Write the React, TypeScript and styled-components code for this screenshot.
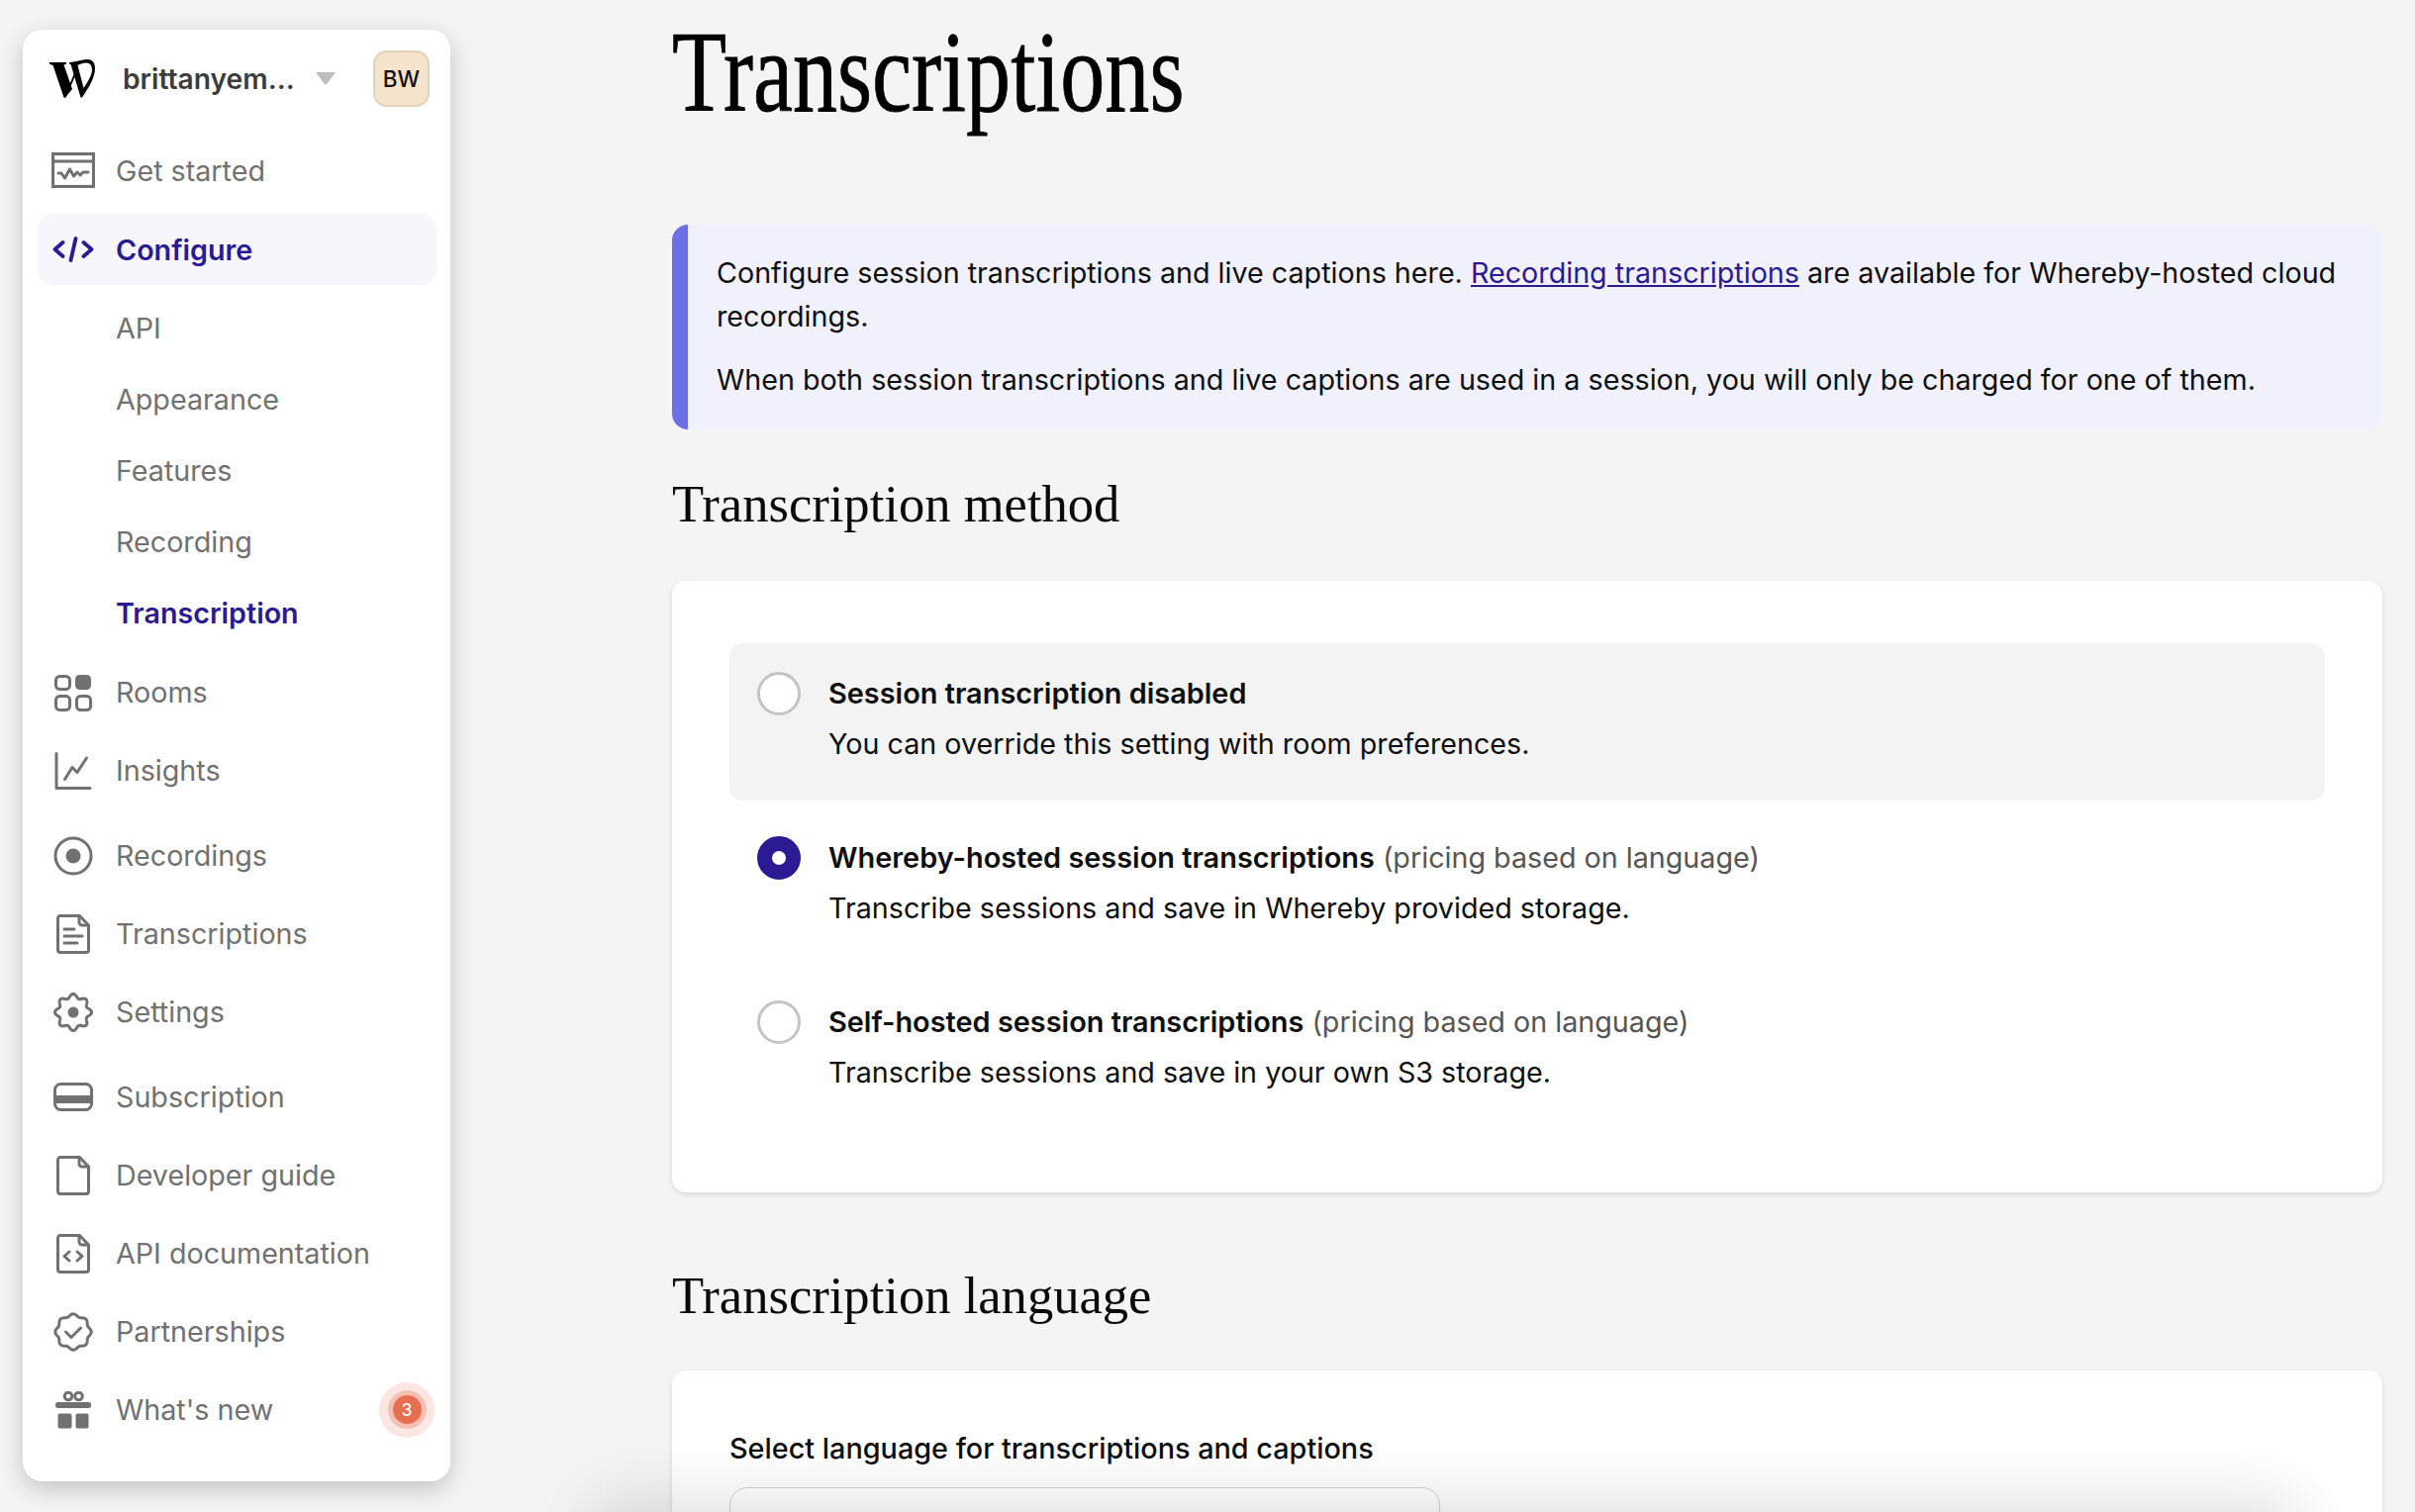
import React from 'react';
import styled, { createGlobalStyle } from 'styled-components';

const GlobalStyle = createGlobalStyle`
  html, body {
    margin: 0;
    height: 100%;
    background: #f4f4f4;
    overflow: hidden;
  }
  * { box-sizing: border-box; }
`;

const sans = `Inter, "Noto Sans", sans-serif`;
const serif = `"Liberation Serif", "DejaVu Serif", serif`;
const muted = '#717171';
const brand = '#2a1a94';

const Page = styled.div`
  position: relative;
  display: flex;
  width: 2440px;
  height: 1528px;
  overflow: hidden;
  font-family: ${sans};
  font-size: 28.7px;
  color: #0f0f0f;
`;

const Sidebar = styled.nav`
  flex: none;
  display: flex;
  flex-direction: column;
  align-self: flex-start;
  width: 432px;
  height: 1467px;
  margin: 30px 0 0 23px;
  padding: 21px 14px 0 15px;
  background: #fff;
  border-radius: 20px;
  box-shadow: 0 8px 24px rgba(0, 0, 0, 0.2);
  z-index: 2;
`;

const Account = styled.div`
  display: flex;
  align-items: center;
  flex: none;
  height: 57px;
  padding-left: 12px;
  margin-bottom: 28px;
`;

const AccountName = styled.span`
  margin-left: 28px;
  width: 185px;
  font-size: 28.2px;
  font-weight: 600;
  color: #3c3c3c;
  white-space: nowrap;
`;

const Avatar = styled.span`
  display: flex;
  align-items: center;
  justify-content: center;
  width: 57px;
  height: 57px;
  margin-left: auto;
  margin-right: 7px;
  font-size: 22.5px;
  font-weight: 500;
  color: #111;
  background: #f5e3cc;
  border: 2px solid #e3d2b9;
  border-radius: 14px;
`;

const NavRow = styled.div<{ $h?: number; $top?: number; $active?: boolean }>`
  position: relative;
  display: flex;
  align-items: center;
  flex: none;
  height: ${({ $h }) => $h ?? 79}px;
  margin-top: ${({ $top }) => $top ?? 0}px;
  padding-left: 13px;
  color: ${({ $active }) => ($active ? brand : muted)};
  font-weight: ${({ $active }) => ($active ? 600 : 400)};
  background: ${({ $active }) => ($active ? '#f6f6fc' : 'transparent')};
  border-radius: 16px;
`;

const IconSlot = styled.span`
  display: flex;
  align-items: center;
  justify-content: center;
  width: 46px;
  height: 46px;
  margin-right: 20px;
  flex: none;
`;

const SubList = styled.div`
  display: flex;
  flex-direction: column;
  flex: none;
  margin: 7px 0 5px;
`;

const SubRow = styled.div<{ $active?: boolean }>`
  display: flex;
  align-items: center;
  height: 72px;
  padding-left: 79px;
  color: ${({ $active }) => ($active ? brand : muted)};
  font-weight: ${({ $active }) => ($active ? 600 : 400)};
`;

const BadgeHalo = styled.span`
  position: absolute;
  right: 2px;
  top: 50%;
  width: 56px;
  height: 56px;
  margin-top: -28px;
  border-radius: 50%;
  background: #fbe6e1;
  display: flex;
  align-items: center;
  justify-content: center;
`;

const BadgeRing = styled.span`
  width: 39px;
  height: 39px;
  border-radius: 50%;
  background: #f5c1b4;
  display: flex;
  align-items: center;
  justify-content: center;
`;

const BadgeDot = styled.span`
  width: 29px;
  height: 29px;
  border-radius: 50%;
  background: #e66f51;
  color: #fff;
  font-size: 17px;
  font-weight: 500;
  display: flex;
  align-items: center;
  justify-content: center;
`;

const Main = styled.main`
  flex: none;
  width: 1728px;
  margin-left: 224px;
  display: flex;
  flex-direction: column;
`;

const Title = styled.h1`
  flex: none;
  margin: 0;
  height: 227px;
  font-family: ${serif};
  font-size: 116px;
  line-height: 146px;
  font-weight: 400;
  color: #000;
  white-space: nowrap;
  -webkit-text-stroke: 0.8px #000;
`;

const Squeezed = styled.span`
  display: inline-block;
  transform: scaleX(0.777);
  transform-origin: left center;
`;

const Callout = styled.div`
  flex: none;
  position: relative;
  height: 207px;
  padding: 27px 30px 0 45px;
  background: #f1f1fd;
  border-radius: 16px;
  overflow: hidden;
  line-height: 44px;
  &::before {
    content: '';
    position: absolute;
    left: 0;
    top: 0;
    bottom: 0;
    width: 16px;
    background: #6b70e4;
  }
`;

const CalloutLine = styled.p`
  margin: 0 0 20px;
`;

const InlineLink = styled.a`
  color: ${brand};
  text-decoration: underline;
`;

const SectionTitle = styled.h2<{ $top: number; $bottom: number }>`
  flex: none;
  margin: ${({ $top }) => $top}px 0 ${({ $bottom }) => $bottom}px;
  font-family: ${serif};
  font-size: 52.6px;
  line-height: 64px;
  font-weight: 400;
  color: #0a0a0a;
  white-space: nowrap;
`;

const Card = styled.section<{ $h: number }>`
  height: ${({ $h }) => $h}px;
  flex: none;
  background: #fff;
  border-radius: 14px;
  box-shadow: 0 2px 5px rgba(0, 0, 0, 0.12);
`;

const OptionList = styled.div`
  display: flex;
  flex-direction: column;
  padding: 63px 58px 0;
`;

const Option = styled.div<{ $selected?: boolean }>`
  display: flex;
  height: 159px;
  margin-bottom: 7px;
  padding: 25px 28px 0;
  border-radius: 14px;
  background: ${({ $selected }) => ($selected ? '#f3f3f3' : 'transparent')};
`;

const Radio = styled.span<{ $on?: boolean }>`
  flex: none;
  width: 44px;
  height: 44px;
  margin: 4px 28px 0 0;
  border-radius: 50%;
  border: ${({ $on }) => ($on ? `15px solid ${brand}` : '3px solid #c4c4c4')};
  background: #fff;
`;

const OptionText = styled.div`
  line-height: 51px;
`;

const OptionTitle = styled.div`
  white-space: nowrap;
`;

const Strong = styled.strong`
  font-size: 28.9px;
  font-weight: 600;
`;

const Pricing = styled.span`
  color: #555;
`;

const LanguageBody = styled.div`
  padding: 59px 58px 0;
`;

const FieldLabel = styled.div`
  font-size: 28.8px;
  font-weight: 500;
  line-height: 40px;
  margin-bottom: 19px;
`;

const SelectBox = styled.div`
  width: 718px;
  height: 80px;
  border: 1px solid #d2d2d2;
  border-radius: 18px;
`;

const BottomShade = styled.div`
  position: absolute;
  left: 620px;
  top: 1540px;
  width: 1680px;
  height: 60px;
  box-shadow: 0 0 70px 20px rgba(0, 0, 0, 0.14);
  z-index: 1;
`;

const stroke = { fill: 'none', stroke: muted, strokeWidth: 3, strokeLinecap: 'round', strokeLinejoin: 'round' } as const;

// closed wavy outline round a centre, for the gear and the badge
const wavyPath = (c: number, r: number, amp: number, lobes: number) => {
  const pts: string[] = [];
  for (let i = 0; i < 240; i++) {
    const a = (i / 240) * Math.PI * 2;
    const rr = r + amp * Math.cos(a * lobes);
    pts.push(`${(c + rr * Math.cos(a)).toFixed(2)} ${(c + rr * Math.sin(a)).toFixed(2)}`);
  }
  return `M${pts.join('L')}Z`;
};

const Logo = () => (
  <svg width="46" height="39" viewBox="0 0 46 39" style={{ flex: 'none' }}>
    <path fill="#000" d="M0 3H17V4.800L14.500 5.500 23 30 16 38.500H14.500L3.500 6 0 4.800Z" />
    <path fill="#000" d="M14.500 38.500 26 12l1.200 2L16.500 38.500Z" />
    <path
      fill="#000"
      fillRule="evenodd"
      d="M20 3C26 3 33 0 38 0C43 0 46 3 46 9C46 19 39 29 33 38.500H31.500L21.500 5 20 4.500ZM28.500 6 34.500 29C38.500 23 43 16 43 10.500C43 6.500 41 3.500 37.500 3.500C34.500 3.500 31 4.500 28.500 6Z"
    />
  </svg>
);

const GetStartedIcon = () => (
  <svg width="44" height="36" viewBox="0 0 44 36">
    <rect x="1.500" y="1.500" width="41" height="33" {...stroke} strokeWidth={3.200} strokeLinejoin="miter" />
    <path {...stroke} strokeWidth={3.200} strokeLinecap="butt" d="M1.500 9h41" />
    <path {...stroke} strokeWidth={3} d="M7 21h3l3.500 5 5-9 4 7 3.500-4 3 3 3-3h5" />
  </svg>
);

const ConfigureIcon = () => (
  <svg width="42" height="26" viewBox="0 0 42 26" fill="none" stroke={brand} strokeWidth="3.800" strokeLinecap="round" strokeLinejoin="round">
    <path d="M10.500 6 2.500 13l8 7" />
    <path d="M31.500 6l8 7-8 7" />
    <path d="M23.500 2 18.500 24" />
  </svg>
);

const RoomsIcon = () => (
  <svg width="38" height="38" viewBox="0 0 38 38">
    <rect x="1.500" y="2.500" width="14" height="13" rx="4" {...stroke} />
    <rect x="21" y="1" width="16" height="15" rx="4.500" fill={muted} />
    <rect x="1.500" y="22.500" width="14" height="14" rx="4" {...stroke} />
    <rect x="22.500" y="22.500" width="14" height="14" rx="4" {...stroke} />
  </svg>
);

const InsightsIcon = () => (
  <svg width="38" height="38" viewBox="0 0 38 38">
    <path {...stroke} d="M2 1.500V36.500H36" />
    <path {...stroke} d="M10.500 27.500 18 15.500l5 5L32.500 6" />
  </svg>
);

const RecordingsIcon = () => (
  <svg width="40" height="40" viewBox="0 0 40 40">
    <circle cx="20" cy="20" r="18" {...stroke} />
    <circle cx="20" cy="20" r="7.500" fill={muted} />
  </svg>
);

const pagePath = 'M5 1.500h19.500L33.500 11v25a2.500 2.500 0 0 1-2.500 2.500H5A2.500 2.500 0 0 1 2.500 36V4A2.500 2.500 0 0 1 5 1.500z';
const foldPath = 'M24 2v6a3 3 0 0 0 3 3h6';

const TranscriptionsIcon = () => (
  <svg width="36" height="40" viewBox="0 0 36 40">
    <path {...stroke} d={pagePath} />
    <path {...stroke} d={foldPath} />
    <path {...stroke} d="M9 15h10M9 22h18M9 29h13" />
  </svg>
);

const SettingsIcon = () => (
  <svg width="40" height="40" viewBox="0 0 40 40">
    <path {...stroke} d={wavyPath(20, 16.500, 2, 8)} />
    <circle cx="20" cy="20" r="5.500" fill={muted} />
  </svg>
);

const SubscriptionIcon = () => (
  <svg width="40" height="30" viewBox="0 0 40 30">
    <rect x="1.500" y="1.500" width="37" height="26" rx="6" {...stroke} />
    <rect x="2" y="13" width="36" height="8" fill={muted} />
  </svg>
);

const DevGuideIcon = () => (
  <svg width="36" height="40" viewBox="0 0 36 40">
    <path {...stroke} d={pagePath} />
    <path {...stroke} d={foldPath} />
  </svg>
);

const ApiDocsIcon = () => (
  <svg width="36" height="40" viewBox="0 0 36 40">
    <path {...stroke} d={pagePath} />
    <path {...stroke} d={foldPath} />
    <path {...stroke} d="M14 18l-5 4.500 5 4.500M22 18l5 4.500-5 4.500" />
  </svg>
);

const PartnershipsIcon = () => (
  <svg width="40" height="40" viewBox="0 0 40 40">
    <path {...stroke} d={wavyPath(20, 17, 1.200, 8)} />
    <path {...stroke} d="M12.500 20l5.500 5.500 9.500-9.500" />
  </svg>
);

const GiftIcon = () => (
  <svg width="38" height="38" viewBox="0 0 38 38">
    <circle cx="14" cy="5" r="3.800" {...stroke} />
    <circle cx="24.500" cy="5" r="3.800" {...stroke} />
    <rect x="1" y="11" width="36" height="6" rx="2.500" fill={muted} />
    <rect x="3.500" y="22.500" width="14" height="15" rx="2" fill={muted} />
    <rect x="21.500" y="22.500" width="13" height="15" rx="2" fill={muted} />
  </svg>
);

const Caret = () => (
  <svg width="22" height="13" viewBox="0 0 22 13" style={{ flex: 'none', marginLeft: 9 }}>
    <path fill="#bdbdbd" d="M1 0h20l-8.500 11.500a2 2 0 0 1-3 0z" />
  </svg>
);

export default function App() {
  return (
    <>
      <GlobalStyle />
      <Page>
        <Sidebar>
          <Account>
            <Logo />
            <AccountName>brittanyem...</AccountName>
            <Caret />
            <Avatar>BW</Avatar>
          </Account>
          <NavRow $h={72}><IconSlot><GetStartedIcon /></IconSlot>Get started</NavRow>
          <NavRow $h={72} $top={8} $active><IconSlot><ConfigureIcon /></IconSlot>Configure</NavRow>
          <SubList>
            <SubRow>API</SubRow>
            <SubRow>Appearance</SubRow>
            <SubRow>Features</SubRow>
            <SubRow>Recording</SubRow>
            <SubRow $active>Transcription</SubRow>
          </SubList>
          <NavRow><IconSlot><RoomsIcon /></IconSlot>Rooms</NavRow>
          <NavRow><IconSlot><InsightsIcon /></IconSlot>Insights</NavRow>
          <NavRow $top={7}><IconSlot><RecordingsIcon /></IconSlot>Recordings</NavRow>
          <NavRow><IconSlot><TranscriptionsIcon /></IconSlot>Transcriptions</NavRow>
          <NavRow><IconSlot><SettingsIcon /></IconSlot>Settings</NavRow>
          <NavRow $top={7}><IconSlot><SubscriptionIcon /></IconSlot>Subscription</NavRow>
          <NavRow><IconSlot><DevGuideIcon /></IconSlot>Developer guide</NavRow>
          <NavRow><IconSlot><ApiDocsIcon /></IconSlot>API documentation</NavRow>
          <NavRow><IconSlot><PartnershipsIcon /></IconSlot>Partnerships</NavRow>
          <NavRow>
            <IconSlot><GiftIcon /></IconSlot>What's new
            <BadgeHalo><BadgeRing><BadgeDot>3</BadgeDot></BadgeRing></BadgeHalo>
          </NavRow>
        </Sidebar>
        <Main>
          <Title><Squeezed>Transcriptions</Squeezed></Title>
          <Callout>
            <CalloutLine>
              Configure session transcriptions and live captions here. <InlineLink>Recording transcriptions</InlineLink> are available for Whereby-hosted cloud recordings.
            </CalloutLine>
            <CalloutLine>
              When both session transcriptions and live captions are used in a session, you will only be charged for one of them.
            </CalloutLine>
          </Callout>
          <SectionTitle $top={43} $bottom={46}>Transcription method</SectionTitle>
          <Card $h={618}>
            <OptionList>
              <Option $selected>
                <Radio />
                <OptionText>
                  <OptionTitle><Strong>Session transcription disabled</Strong></OptionTitle>
                  You can override this setting with room preferences.
                </OptionText>
              </Option>
              <Option>
                <Radio $on />
                <OptionText>
                  <OptionTitle><Strong>Whereby-hosted session transcriptions</Strong> <Pricing>(pricing based on language)</Pricing></OptionTitle>
                  Transcribe sessions and save in Whereby provided storage.
                </OptionText>
              </Option>
              <Option>
                <Radio />
                <OptionText>
                  <OptionTitle><Strong>Self-hosted session transcriptions</Strong> <Pricing>(pricing based on language)</Pricing></OptionTitle>
                  Transcribe sessions and save in your own S3 storage.
                </OptionText>
              </Option>
            </OptionList>
          </Card>
          <SectionTitle $top={72} $bottom={44}>Transcription language</SectionTitle>
          <Card $h={300}>
            <LanguageBody>
              <FieldLabel>Select language for transcriptions and captions</FieldLabel>
              <SelectBox />
            </LanguageBody>
          </Card>
        </Main>
        <BottomShade />
      </Page>
    </>
  );
}
